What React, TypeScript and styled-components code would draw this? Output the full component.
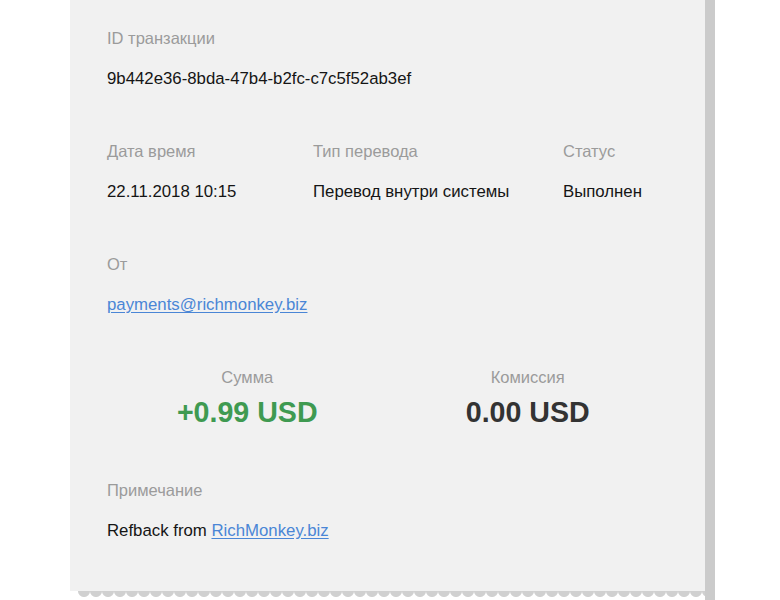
import React from "react";
import styled, { createGlobalStyle } from "styled-components";

const Global = createGlobalStyle`
  html, body { margin: 0; padding: 0; background: #ffffff; }
  body { font-family: "Liberation Sans", Arial, Helvetica, sans-serif; }
`;

const Page = styled.div`
  width: 780px;
  height: 600px;
  overflow: hidden;
  background: #ffffff;
  padding-left: 70px;
  box-sizing: border-box;
`;

const Receipt = styled.div`
  width: 635px;
  display: flex;
  flex-direction: column;
`;

const Card = styled.div`
  background: #f1f1f1;
  box-shadow: 10px 0 0 #cbcbcb;
  padding: 28px 37px 50px;
  display: flex;
  flex-direction: column;
  gap: 52px;
`;

const Zigzag = styled.div`
  height: 9px;
  margin-left: 8px;
  margin-right: -10px;
  background-image: radial-gradient(circle at 6px 0px, #d0d0d0 5.5px, transparent 6.5px);
  background-size: 12px 9px;
  background-repeat: repeat-x;
  position: relative;
  &::after {
    content: "";
    position: absolute;
    right: 0;
    top: 0;
    width: 10px;
    height: 100%;
    background: #cbcbcb;
  }
`;

const Field = styled.div<{ $center?: boolean }>`
  display: flex;
  flex-direction: column;
  align-items: ${(p) => (p.$center ? "center" : "flex-start")};
  gap: ${(p) => (p.$center ? "9px" : "21px")};
`;

const Label = styled.div`
  font-size: 16.5px;
  line-height: 20px;
  color: #9b9b9b;
`;

const Value = styled.div`
  font-size: 16.8px;
  line-height: 20px;
  color: #151515;
`;

const Link = styled.a`
  color: #4a86d6;
  text-decoration: underline;
  text-underline-offset: 2px;
`;

const Row = styled.div`
  display: grid;
  grid-template-columns: 206px 250px auto;
`;

const Amounts = styled.div`
  display: grid;
  grid-template-columns: 1fr 1fr;
`;

const Amount = styled.div<{ $positive?: boolean }>`
  font-size: 28.6px;
  line-height: 32px;
  font-weight: 700;
  color: ${(p) => (p.$positive ? "#3f9a51" : "#333333")};
`;

export default function App() {
  return (
    <Page>
      <Global />
      <Receipt>
        <Card>
          <Field>
            <Label>ID транзакции</Label>
            <Value>9b442e36-8bda-47b4-b2fc-c7c5f52ab3ef</Value>
          </Field>
          <Row>
            <Field>
              <Label>Дата время</Label>
              <Value>22.11.2018 10:15</Value>
            </Field>
            <Field>
              <Label>Тип перевода</Label>
              <Value>Перевод внутри системы</Value>
            </Field>
            <Field>
              <Label>Статус</Label>
              <Value>Выполнен</Value>
            </Field>
          </Row>
          <Field>
            <Label>От</Label>
            <Value>
              <Link href="#">payments@richmonkey.biz</Link>
            </Value>
          </Field>
          <Amounts>
            <Field $center>
              <Label>Сумма</Label>
              <Amount $positive>+0.99 USD</Amount>
            </Field>
            <Field $center>
              <Label>Комиссия</Label>
              <Amount>0.00 USD</Amount>
            </Field>
          </Amounts>
          <Field>
            <Label>Примечание</Label>
            <Value>
              Refback from <Link href="#">RichMonkey.biz</Link>
            </Value>
          </Field>
        </Card>
        <Zigzag />
      </Receipt>
    </Page>
  );
}
